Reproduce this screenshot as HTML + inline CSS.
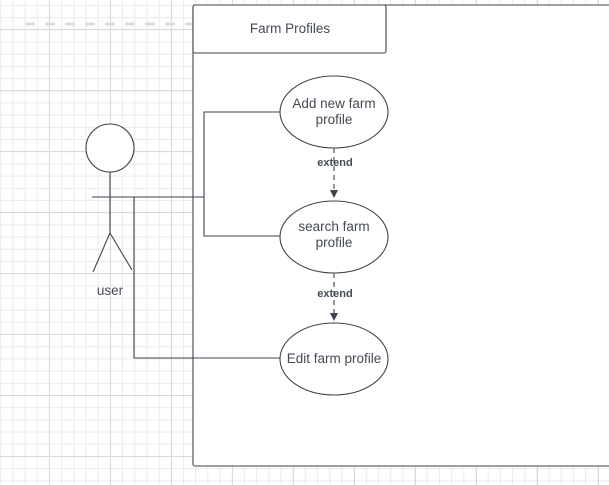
<!DOCTYPE html><html><head><style>
body{margin:0;width:609px;height:485px;overflow:hidden;background:#fff;
background-image:linear-gradient(#dadada 1px,transparent 1px),linear-gradient(90deg,#dadada 1px,transparent 1px),linear-gradient(#ebebeb 1px,transparent 1px),linear-gradient(90deg,#ebebeb 1px,transparent 1px);
background-size:61px 61px,61px 61px,12.2px 12.2px,12.2px 12.2px;background-position:0 29px,49px 0,0 5px,0.2px 0;}
svg{position:absolute;left:0;top:0}
text{font-family:"Liberation Sans",sans-serif;fill:#444a55}
</style></head><body>
<svg width="609" height="485">
<line x1="25" y1="24" x2="193" y2="24" stroke="#dcdcdc" stroke-width="3" stroke-dasharray="10,10"/>
<rect x="193" y="5" width="430" height="461" rx="2" fill="#fff" stroke="#3d434e" stroke-width="1.1"/>
<rect x="193" y="5" width="193" height="48" rx="2" fill="#fff" stroke="#3d434e" stroke-width="1.1"/>
<text x="290" y="33" font-size="13.5" text-anchor="middle">Farm Profiles</text>
<g fill="#fff" stroke="#3d434e" stroke-width="1.1">
<ellipse cx="334" cy="112" rx="54" ry="36"/>
<ellipse cx="334" cy="237" rx="54" ry="36"/>
<ellipse cx="334" cy="359" rx="54" ry="36"/>
<circle cx="110" cy="148" r="24"/>
</g>
<g fill="none" stroke="#3d434e" stroke-width="1.1">
<path d="M110 172V233M110 233L93 272M110 233L132 270M92 197H204M204 197V112H280M204 197V236H280M134 197V358H280"/>
<path d="M334 148V190M334 273V315" stroke-dasharray="5,4"/>
</g>
<path d="M330 190h8l-4 8z M330 313h8l-4 8z" fill="#3d434e"/>
<text x="334" y="108" font-size="13.5" text-anchor="middle">Add new farm</text>
<text x="334" y="124" font-size="13.5" text-anchor="middle">profile</text>
<text x="334" y="231" font-size="13.5" text-anchor="middle">search farm</text>
<text x="334" y="247" font-size="13.5" text-anchor="middle">profile</text>
<text x="334" y="363" font-size="13.5" text-anchor="middle">Edit farm profile</text>
<text x="335" y="166" font-size="11" font-weight="bold" text-anchor="middle">extend</text>
<text x="335" y="297" font-size="11" font-weight="bold" text-anchor="middle">extend</text>
<text x="110" y="295" font-size="13.5" text-anchor="middle">user</text>
</svg></body></html>
